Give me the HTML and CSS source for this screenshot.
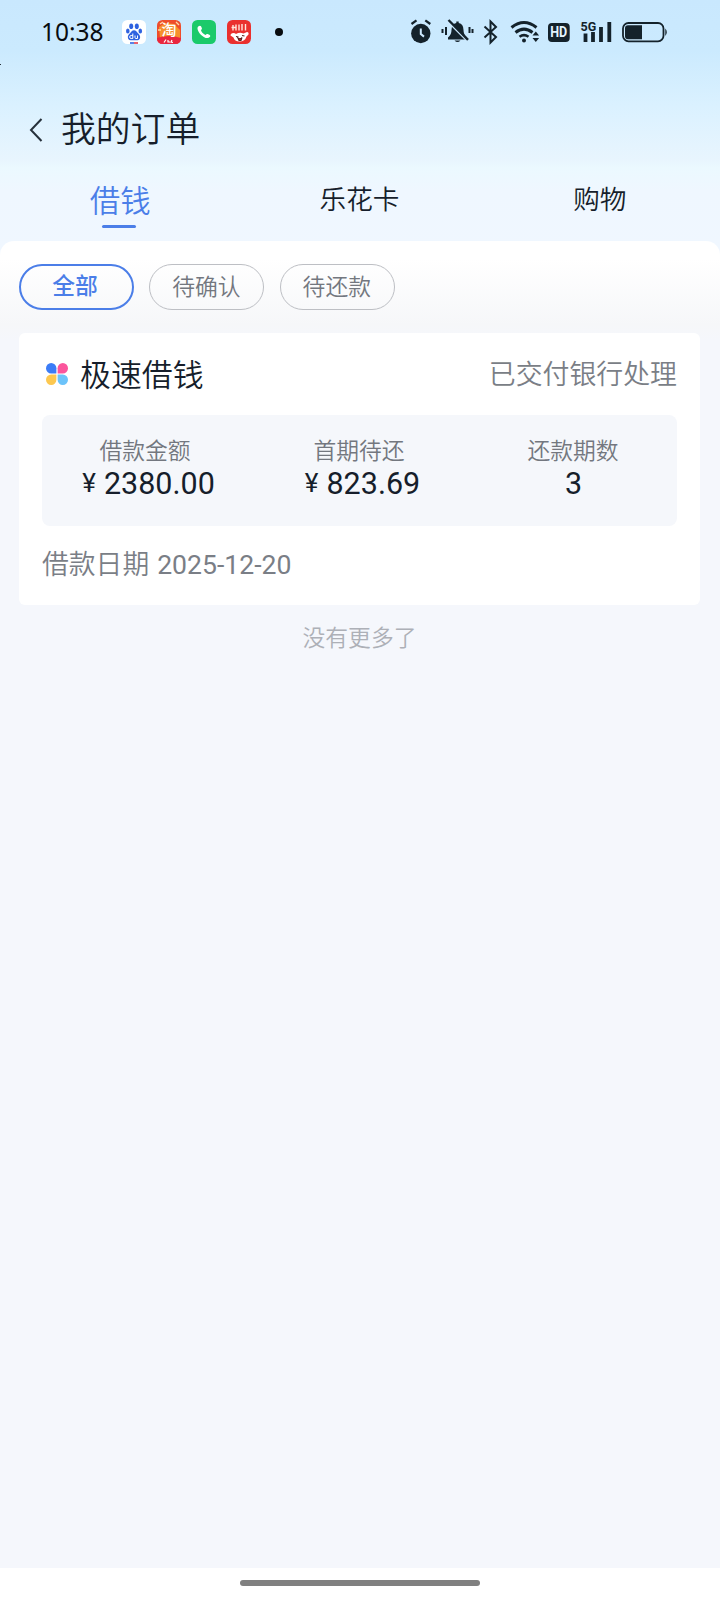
FILE: index.html
```html
<!DOCTYPE html>
<html lang="zh-CN">
<head>
<meta charset="utf-8">
<title>我的订单</title>
<link rel="stylesheet" href="styles.css">
</head>
<body>
<div class="phone">
  <div class="hero">
    <div class="statusbar">
      <span class="clock">10:38</span>
      <div class="apps">
        <svg class="app" viewBox="0 0 24 24"><rect width="24" height="24" rx="5.5" fill="#fff"/><g fill="#2f62e0"><ellipse cx="9.2" cy="6.3" rx="2" ry="2.8"/><ellipse cx="14.8" cy="6.3" rx="2" ry="2.8"/><ellipse cx="5.8" cy="11" rx="1.8" ry="2.5"/><ellipse cx="18.3" cy="11" rx="1.8" ry="2.5"/><path d="M12 10.2c2 0 2.8 1.700 4 3 1.500 1.500 2.600 2.800 2 5-.7 2.300-3 2.200-6 2-3 .2-5.300.3-6-2-.6-2.200.5-3.500 2-5 1.200-1.300 2-3 4-3z"/></g><path d="M10.800 13.500v5H9.200a1.500 1.500 0 0 1 0-3h1.600M13 15.500v2q0 1 1 1h1.500v-3" fill="none" stroke="#fff"/><path d="M8 23h4" stroke="#2f62e0" stroke-width="1.600"/><path d="M12 23h4" stroke="#e23b4b" stroke-width="1.600"/></svg>
        <svg class="app" viewBox="0 0 24 24"><defs><clipPath id="r1"><rect width="24" height="24" rx="5.500"/></clipPath></defs><g clip-path="url(#r1)"><path fill="#ee4d2b" d="M0 0h24v24H0z"/><path fill="#f6912c" d="M2 7l6-4 9 1 6 6v8H3z"/><path fill="#e9263f" d="M0 18q12-4 24 0v6H0z"/><path d="M3 4l3-2M19 2l3 3M1 10h3" stroke="#ffd9a0" stroke-width="1.300"/><path d="M9 19.500l-2 3M11 20v2h2M15 20l-1 2 2 .500" fill="none" stroke="#fff" stroke-width="1.200"/></g><text class="tao" x="4.500" y="15">淘</text></svg>
        <svg class="app" viewBox="0 0 24 24"><rect width="24" height="24" rx="5.500" fill="#1bca6a"/><path d="M6.500 6.200c1.200-1 2.300-.6 2.800.6l.6 1.500c.3.900-.7 1.500-.9 2 .6 1.900 2.300 3.700 4.400 4.600.7-.3 1.200-1.200 2.200-.9l1.700.7c1.100.5 1.300 1.500.5 2.400-1.400 1.500-3.700 1.200-6-.2-2.900-1.800-5-4.100-6-7-.500-1.600-.4-2.800.7-3.700z" fill="#fff"/></svg>
        <svg class="app" viewBox="0 0 24 24"><rect width="24" height="24" rx="5.500" fill="#ea302e"/><path d="M6 5v5.500M9 4.500v6M12 4.500v6M15 4v6.500M18.500 4v6.500M4.500 7.500h5" stroke="#ffe6dc" stroke-width="1.400"/><path d="M3.500 15.500q0-2.500 3-2.500 1.500 0 2.500 1 3.500-2 7.500-.5l3.500-1.500q2 0 1.500 2.500l-2 2q-1.500 5-7 5-5 0-6-4z" fill="#fff"/><path d="M9 16.500l2.500.5M15 15.500l2.500.5M11 18.200q2.500 1.300 4-.7l-1 3h-2z" stroke="#55201f" stroke-width="1.100" fill="#d22"/></svg>
      </div>
      <i class="dot"></i>
      <svg class="sys" viewBox="0 0 262 30" fill="#14222b">
        <circle cx="12.800" cy="15.500" r="9.700"/><path d="M3.500 6l5-3.700M22.300 6l-5-3.700" stroke="#14222b" stroke-width="2.200"/><path d="M12.800 10.500v5.500l3.200 2.600" fill="none" stroke="#cdeaff" stroke-width="2"/>
        <path d="M40 19.500q3.500-2.500 3.500-7.500 0-6 4.800-7V3.500h2.400V5q4.800 1 4.800 7 0 5 3.500 7.500v2H40zM46.500 22.500h6q-3 3-6 0z"/><path d="M39.500 3l20 20" stroke="#cdeaff" stroke-width="2.200"/><path d="M40.500 2L60 21.800" stroke="#14222b" stroke-width="2.400"/><path d="M38 9v8M34.500 11v4M61.500 9v6M64.500 11v4" stroke="#14222b" stroke-width="2"/>
        <path d="M76.500 8.500L88 19l-5.500 5.500V3.500L88 9 76.500 19.500" fill="none" stroke="#14222b" stroke-width="2"/>
        <g fill="none" stroke="#14222b" stroke-width="3"><path d="M103.500 9.500q12.500-10 25 0M107.500 14.500q8.500-6.800 17 0"/><path d="M111.500 18.800q4.500-3.300 9 0" stroke-width="2.600"/></g><circle cx="116" cy="22.500" r="2"/><path d="M124.500 17.500l3.300-4 3.300 4zM124.500 20h6.600l-3.300 4z"/>
        <rect x="140" y="5" width="21.700" height="19" rx="4"/><text class="hd" x="142.200" y="19.300" textLength="17" lengthAdjust="spacingAndGlyphs">HD</text>
        <text class="net" x="172.500" y="12.500">5G</text><path d="M177.500 15.500v8.500M185 14v10M193 9v15M201.300 4v20" fill="none" stroke="#14222b" stroke-width="3.800"/>
        <rect x="215" y="5" width="40.500" height="18.300" rx="5.500" fill="none" stroke="#14222b" stroke-width="1.800"/><path d="M220 7.200h14v14h-14q-3 0-3-3v-8q0-3 3-3zM257.300 10.500q3 3.700 0 7.500z"/>
      </svg>
    </div>
    <header class="titlebar">
      <svg class="back" viewBox="0 0 14 26"><path d="M12.500 2L2 13l10.500 11" fill="none" stroke="#26313b" stroke-width="2"/></svg>
      <h1>我的订单</h1>
      <i class="speck"></i>
    </header>
    <nav class="tabs">
      <span class="tab current"><span>借钱</span></span>
      <span class="tab">乐花卡</span>
      <span class="tab">购物</span>
    </nav>
  </div>
  <main class="panel">
    <div class="filters">
      <span class="pill chosen">全部</span>
      <span class="pill">待确认</span>
      <span class="pill">待还款</span>
    </div>
    <article class="card">
      <div class="card-head">
        <svg class="clover" viewBox="0 0 22 22"><path fill="#3b7cf7" d="M5.200 0a5.200 5.200 0 0 1 5.200 5.200v5.200H5.200a5.200 5.200 0 0 1 0-10.400z"/><path fill="#fb559c" d="M16.800 0a5.200 5.200 0 0 1 0 10.400h-5.200V5.200A5.200 5.200 0 0 1 16.800 0z"/><path fill="#fdc850" d="M5.200 11.600h5.200v5.200a5.200 5.200 0 1 1-5.200-5.200z"/><path fill="#6cc3fa" d="M11.600 11.600h5.200a5.200 5.200 0 1 1-5.200 5.200z"/></svg>
        <h2>极速借钱</h2>
        <span class="state">已交付银行处理</span>
      </div>
      <div class="figures">
        <div class="figure"><span class="label">借款金额</span><span class="value"><small>¥</small>2380.00</span></div>
        <div class="figure"><span class="label">首期待还</span><span class="value"><small>¥</small>823.69</span></div>
        <div class="figure"><span class="label">还款期数</span><span class="value">3</span></div>
      </div>
      <p class="date">借款日期 <span class="num">2025-12-20</span></p>
    </article>
    <p class="end">没有更多了</p>
  </main>
  <div class="homebar"><i class="handle"></i></div>
</div>
</body>
</html>
```
FILE: styles.css
```css
* { box-sizing: border-box; }
body, h1, h2, p { margin: 0; font-weight: 350; }
body { font-family: "Noto Sans CJK SC", "Noto Sans", sans-serif; color: #161e2b; }
.phone { width: 720px; height: 1600px; display: flex; flex-direction: column; background: #f5f7fc; overflow: hidden; }
.hero { height: 257px; background: linear-gradient(#c9e8fe 0, #cbeafe 50px, #daf1ff 105px, #e8f5fe 160px, #ebf9ff 168px, #eff7ff 190px, #f0f7ff 257px); }

.statusbar { height: 64px; display: flex; align-items: center; padding-left: 41px; }
.clock { width: 81px; font: 400 24.500px/64px "Noto Sans", sans-serif; color: #080c10; }
.apps { display: flex; gap: 11px; }
.app { width: 24px; height: 24px; display: block; overflow: visible; }
.tao { font: 500 15px "Noto Sans CJK SC", sans-serif; fill: #fff; }
.dot { width: 8px; height: 8px; border-radius: 50%; background: #080c10; margin-left: 24px; }
.sys { width: 262px; height: 30px; margin-left: 125px; margin-top: 2px; }
.hd { font: 700 14px Roboto, sans-serif; fill: #e4f4ff; }
.net { font: 700 12.500px Roboto, sans-serif; }

.titlebar { position: relative; height: 130px; margin-bottom: -21px; display: flex; align-items: center; padding: 0 0 0 29px; }
.back { width: 14px; height: 26px; margin-right: 18px; margin-top: 2px; }
h1 { font-size: 34.800px; line-height: 50px; margin-top: -5px; }
.speck { position: absolute; left: 0; top: 0; width: 1px; height: 1px; background: #26313b; }

.tabs { display: grid; grid-template-columns: repeat(3, 1fr); margin-left: -1px; }
.tab { text-align: center; font-size: 26.600px; line-height: 49px; }
.tab.current { color: #4b7ee8; font-size: 30.400px; line-height: 53px; display: flex; flex-direction: column; align-items: center; }
.tab.current span { padding-left: 2px; }
.tab.current::after { content: ""; width: 34px; height: 3px; border-radius: 2px; background: #4b7ee8; margin-top: -1px; }

.panel { position: relative; flex: 1; margin-top: -16px; padding: 23px 20px 0 19px; border-radius: 14px 14px 0 0; background: linear-gradient(#fff 0, #fff 18px, #f6f7f9 84px, #f5f7fc 100px); }
.filters { display: flex; gap: 15.400px; }
.pill { width: 115px; height: 46px; border: 1px solid #bdbfc4; border-radius: 23px; text-align: center; font-size: 22.800px; line-height: 42px; color: #73777f; padding-right: 1px; }
.pill.chosen { border: 2px solid #4b7ee8; color: #4b7ee8; font-weight: 500; line-height: 38px; padding-right: 3px; }

.card { height: 272px; margin-top: 23px; padding: 18px 23px 0; border-radius: 6px; background: #fff; }
.card-head { display: flex; align-items: center; height: 46px; }
.clover { width: 22px; height: 22px; margin: 0 12px 0 4px; }
h2 { font-size: 30.900px; line-height: 44px; padding-bottom: 2px; }
.state { margin-left: auto; font-size: 26.900px; line-height: 44px; padding-bottom: 2px; color: #7a7e86; }
.figures { display: grid; grid-template-columns: repeat(3, 214px); justify-content: center; height: 111px; margin-top: 18px; padding-top: 18px; border-radius: 8px; background: #f5f7fb; }
.figure { display: flex; flex-direction: column; align-items: center; }
.label { font-size: 22.800px; line-height: 33px; color: #73777f; padding-right: 1px; }
.value { font: 400 30.500px/36px Roboto, sans-serif; }
.value small { font-size: 26px; margin: 0 8px 0 6px; vertical-align: 2px; line-height: 1; }
.date { margin-top: 14px; font-size: 26.800px; line-height: 46px; color: #7a7e86; }
.num { font-family: Roboto, sans-serif; font-weight: 400; font-size: 26.600px; margin-left: 2px; }
.end { margin-top: 15px; text-align: center; font-size: 22.800px; line-height: 34px; color: #adb0b7; }

.homebar { height: 32px; background: #fff; display: flex; justify-content: center; padding-top: 12px; }
.handle { width: 240px; height: 6px; border-radius: 3px; background: #808080; }
```
